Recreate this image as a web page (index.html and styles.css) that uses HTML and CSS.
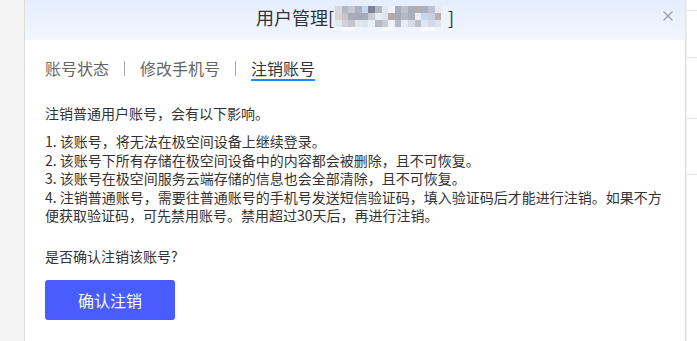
FILE: index.html
```html
<!DOCTYPE html>
<html lang="zh-CN">
<head>
<meta charset="utf-8">
<title>用户管理</title>
<link rel="stylesheet" href="styles.css">
</head>
<body>
<div class="page">
  <div class="side-left"></div>
  <div class="modal">
    <div class="modal-header">
      <div class="title">用户管理[<svg class="mosaic" width="113" height="28" viewBox="0 0 17 4" preserveAspectRatio="none" aria-hidden="true">
        <g shape-rendering="crispEdges">
          <rect x="0" y="0" width="1" height="1" fill="#d4d8e0"/><rect x="1" y="0" width="1" height="1" fill="#b4b9c6"/><rect x="2" y="0" width="1" height="1" fill="#c3c8d3"/><rect x="3" y="0" width="1" height="1" fill="#a9b2c4"/><rect x="4" y="0" width="1" height="1" fill="#c6d4ec"/><rect x="5" y="0" width="1" height="1" fill="#7d8392"/><rect x="6" y="0" width="1" height="1" fill="#b2b6be"/><rect x="7" y="0" width="1" height="1" fill="#e2e6ee"/><rect x="8" y="0" width="1" height="1" fill="#eef2f9"/><rect x="9" y="0" width="1" height="1" fill="#a8aebb"/><rect x="10" y="0" width="1" height="1" fill="#bdc2cc"/><rect x="11" y="0" width="1" height="1" fill="#a9aeb9"/><rect x="12" y="0" width="1" height="1" fill="#b3adad"/><rect x="13" y="0" width="1" height="1" fill="#a8afbf"/><rect x="14" y="0" width="1" height="1" fill="#bfc3cc"/><rect x="15" y="0" width="1" height="1" fill="#e5ebf5"/><rect x="16" y="0" width="1" height="1" fill="#eef3fb"/>
          <rect x="0" y="1" width="1" height="1" fill="#d8d4d8"/><rect x="1" y="1" width="1" height="1" fill="#c9c2c6"/><rect x="2" y="1" width="1" height="1" fill="#a8adb9"/><rect x="3" y="1" width="1" height="1" fill="#a3a9b6"/><rect x="4" y="1" width="1" height="1" fill="#a6abb8"/><rect x="5" y="1" width="1" height="1" fill="#c9ccd4"/><rect x="6" y="1" width="1" height="1" fill="#e8ecf3"/><rect x="7" y="1" width="1" height="1" fill="#dfe5ef"/><rect x="8" y="1" width="1" height="1" fill="#aeaaaa"/><rect x="9" y="1" width="1" height="1" fill="#a4aab8"/><rect x="10" y="1" width="1" height="1" fill="#b4b9c4"/><rect x="11" y="1" width="1" height="1" fill="#a9aebb"/><rect x="12" y="1" width="1" height="1" fill="#e9ecf1"/><rect x="13" y="1" width="1" height="1" fill="#c8d6ec"/><rect x="14" y="1" width="1" height="1" fill="#c6d0e0"/><rect x="15" y="1" width="1" height="1" fill="#b6b0b0"/><rect x="16" y="1" width="1" height="1" fill="#eef2f9"/>
          <rect x="0" y="2" width="1" height="1" fill="#e4e8ef"/><rect x="1" y="2" width="1" height="1" fill="#cfd2da"/><rect x="2" y="2" width="1" height="1" fill="#c3c6cf"/><rect x="3" y="2" width="1" height="1" fill="#e1e6ef"/><rect x="4" y="2" width="1" height="1" fill="#dbe3ef"/><rect x="5" y="2" width="1" height="1" fill="#eaf0f8"/><rect x="6" y="2" width="1" height="1" fill="#b6b9c1"/><rect x="7" y="2" width="1" height="1" fill="#c9ccd5"/><rect x="8" y="2" width="1" height="1" fill="#eef3fa"/><rect x="9" y="2" width="1" height="1" fill="#b5bac5"/><rect x="10" y="2" width="1" height="1" fill="#e8edf5"/><rect x="11" y="2" width="1" height="1" fill="#d4dae6"/><rect x="12" y="2" width="1" height="1" fill="#b9bec8"/><rect x="13" y="2" width="1" height="1" fill="#dfe5f0"/><rect x="14" y="2" width="1" height="1" fill="#d2d8e4"/><rect x="15" y="2" width="1" height="1" fill="#dde2ec"/><rect x="16" y="2" width="1" height="1" fill="#eef2f9"/>
          <rect x="1" y="3" width="2" height="0.5" fill="#f8faff"/><rect x="7" y="3" width="2" height="0.5" fill="#f8faff"/><rect x="13" y="3" width="2" height="0.5" fill="#f8faff"/>
        </g>
      </svg>]</div>
      <button class="close" type="button" aria-label="关闭">
        <svg width="10" height="10" viewBox="0 0 10 10"><path d="M0.5 0.5 L9.5 9.5 M9.5 0.5 L0.5 9.5" stroke="#9a9ca3" stroke-width="1.2" fill="none"/></svg>
      </button>
    </div>
    <div class="modal-body">
      <nav class="tabs">
        <span class="tab">账号状态</span>
        <span class="tab-sep"></span>
        <span class="tab">修改手机号</span>
        <span class="tab-sep"></span>
        <span class="tab active">注销账号</span>
      </nav>
      <p class="intro">注销普通用户账号，会有以下影响。</p>
      <div class="effects">
        <div>1. 该账号，将无法在极空间设备上继续登录。</div>
        <div>2. 该账号下所有存储在极空间设备中的内容都会被删除，且不可恢复。</div>
        <div>3. 该账号在极空间服务云端存储的信息也会全部清除，且不可恢复。</div>
        <div>4. 注销普通账号，需要往普通账号的手机号发送短信验证码，填入验证码后才能进行注销。如果不方便获取验证码，可先禁用账号。禁用超过30天后，再进行注销。</div>
      </div>
      <p class="confirm">是否确认注销该账号?</p>
      <button class="btn-primary" type="button">确认注销</button>
    </div>
  </div>
  <div class="side-right">
    <div class="row r1"></div>
    <div class="row r2"></div>
    <div class="row r3"></div>
    <div class="row r4"></div>
  </div>
</div>
</body>
</html>
```

FILE: styles.css
```css
* { box-sizing: border-box; }
html, body {
  margin: 0;
  padding: 0;
  height: 100%;
  overflow: hidden;
  background: #ffffff;
  font-family: "Noto Sans CJK SC", "Noto Sans", sans-serif;
  color: #333333;
}
.page {
  display: flex;
  height: 341px;
}
.side-left {
  width: 25px;
  flex: none;
  background: #f4f4f4;
  border-right: 1px solid #dcdcdc;
}
.modal {
  width: 660px;
  flex: none;
  background: #ffffff;
  display: flex;
  flex-direction: column;
}
.modal-header {
  height: 40px;
  background: linear-gradient(180deg, #e5eefd 0%, #f2f6fe 100%);
  display: grid;
  grid-template-columns: 1fr auto 1fr;
  align-items: start;
}
.title {
  grid-column: 2;
  font-size: 18px;
  line-height: 34px;
  color: #333333;
  white-space: nowrap;
}
.mosaic {
  vertical-align: top;
  margin-top: 6px;
  margin-left: 1px;
}
.close {
  grid-column: 3;
  justify-self: end;
  margin: 11px 12px 0 0;
  padding: 0;
  border: 0;
  background: transparent;
  width: 10px;
  height: 10px;
  display: flex;
}
.modal-body {
  padding: 18px 20px 0 20px;
}
.tabs {
  display: flex;
  align-items: center;
  gap: 15px;
  height: 23px;
}
.tab {
  font-size: 16px;
  line-height: 21px;
  color: #666666;
  border-bottom: 2px solid transparent;
}
.tab.active {
  color: #333333;
  border-bottom-color: #1a8cff;
}
.tab-sep {
  width: 1px;
  height: 15px;
  background: #a6a6a6;
  margin-bottom: 2px;
}
.intro {
  margin: 23px 0 0 0;
  font-size: 14px;
  line-height: 18.4px;
}
.effects {
  margin-top: 10px;
  font-size: 14px;
  line-height: 18.4px;
}
.confirm {
  margin: 23px 0 0 0;
  font-size: 14px;
  line-height: 18.4px;
}
.btn-primary {
  margin-top: 14px;
  width: 130px;
  height: 40px;
  border: 0;
  border-radius: 3px;
  background: #485cff;
  color: #ffffff;
  font-family: "Noto Sans CJK SC", "Noto Sans", sans-serif;
  font-size: 16px;
  padding: 0;
}
.side-right {
  flex: 1;
  border-left: 1px solid #e2e2e2;
  box-shadow: inset 1px 0 0 #efefef;
  display: flex;
  flex-direction: column;
}
.row {
  border-bottom: 1px solid #e8e8e8;
  flex: none;
}
.r1 { height: 11px; }
.r2 { height: 47px; }
.r3 { height: 61px; }
.r4 { height: 56px; }
```
